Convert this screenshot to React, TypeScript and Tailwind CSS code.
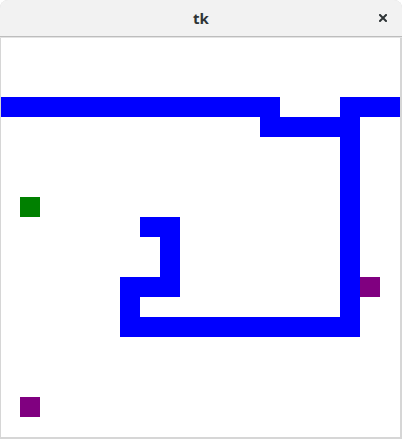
import React from "react";

const CELL = 20;

// snake cells as [col, row]
const snake: [number, number][] = [];
const run = (c0: number, r0: number, c1: number, r1: number) => {
    for (let c = Math.min(c0, c1); c <= Math.max(c0, c1); c++)
        for (let r = Math.min(r0, r1); r <= Math.max(r0, r1); r++) snake.push([c, r]);
};
run(0, 3, 13, 3);
run(17, 3, 19, 3);
run(13, 4, 17, 4);
run(17, 3, 17, 14);
run(6, 14, 17, 14);
run(6, 12, 6, 14);
run(6, 12, 8, 12);
run(8, 9, 8, 12);
run(7, 9, 8, 9);

const items: { c: number; r: number; fill: string }[] = [
    { c: 1, r: 8, fill: "#008000" },
    { c: 1, r: 18, fill: "#800080" },
    { c: 18, r: 12, fill: "#800080" },
];

const App = () => {
    return (
        <div className="w-[402px] h-[439px] bg-[#d6d6d6] rounded-t-[8px] overflow-hidden flex flex-col">
            <div className="h-[37px] shrink-0 bg-[#f2f2f2] border-b border-[#bdbdbd] relative flex items-center justify-center">
                <span className="text-[15px] font-bold text-[#2e3436] font-['Noto_Sans',sans-serif] leading-none">
                    tk
                </span>
                <svg
                    className="absolute right-[15px] top-[14px]"
                    width="8"
                    height="8"
                    viewBox="0 0 8 8"
                >
                    <path d="M1 1 L7 7 M7 1 L1 7" stroke="#2e3436" strokeWidth="2" strokeLinecap="square" />
                </svg>
            </div>
            <div className="relative h-[400px] shrink-0">
                <svg width="400" height="400" className="block bg-white">
                    {snake.map(([c, r], i) => (
                        <rect key={i} x={c * CELL} y={r * CELL} width={CELL} height={CELL} fill="#0000ff" />
                    ))}
                    {items.map((it, i) => (
                        <rect key={"f" + i} x={it.c * CELL} y={it.r * CELL} width={CELL} height={CELL} fill={it.fill} />
                    ))}
                </svg>
                <div className="absolute left-0 top-0 bottom-0 w-px bg-[#d6d6d6]" />
                <div className="absolute left-0 right-0 top-0 h-px bg-[#e3e3e3]" />
            </div>
        </div>
    );
};

export default App;
